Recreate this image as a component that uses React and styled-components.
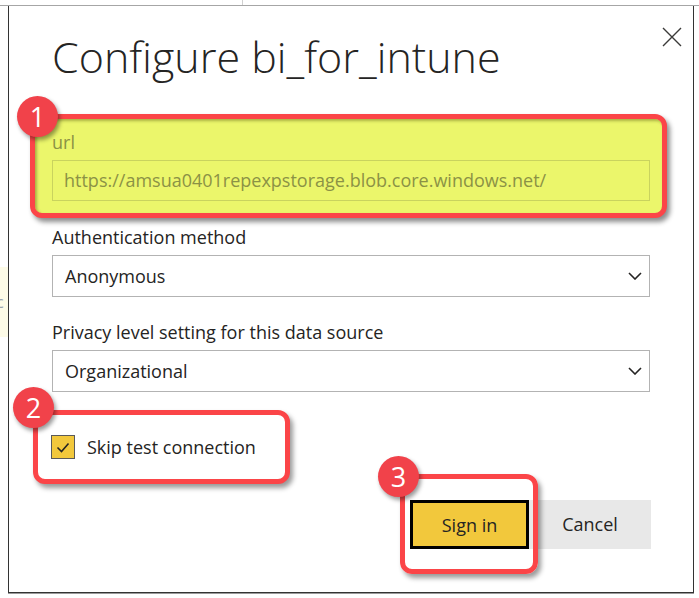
import React from "react";
import styled, { createGlobalStyle } from "styled-components";

const GlobalStyle = createGlobalStyle`
  html, body {
    margin: 0;
    padding: 0;
    background: #ffffff;
  }
  body {
    font-family: "Open Sans", "Noto Sans", sans-serif;
    color: #252423;
  }
`;

function Chevron() {
  return (
    <svg width="14" height="8" viewBox="0 0 14 8" fill="none">
      <path d="M1 1l6 6 6-6" stroke="#252423" strokeWidth="1.6" />
    </svg>
  );
}

function CloseIcon() {
  return (
    <svg width="20" height="20" viewBox="0 0 20 20" fill="none">
      <path d="M1 1l18 18M19 1L1 19" stroke="#3b3a39" strokeWidth="1.4" />
    </svg>
  );
}

function CheckMark() {
  return (
    <svg width="14" height="11" viewBox="0 0 14 11" fill="none">
      <path d="M1.5 5.5l4 4 7-8" stroke="#252423" strokeWidth="1.6" />
    </svg>
  );
}

function App() {
  return (
    <>
      <GlobalStyle />
      <Page>
        <TopStrip>
          <Tick />
        </TopStrip>
        <Body>
          <Gutter>
            <Sliver>c</Sliver>
          </Gutter>
          <Dialog>
            <Header>
              <Title>Configure bi_for_intune</Title>
              <CloseButton aria-label="Close">
                <CloseIcon />
              </CloseButton>
            </Header>

            <Callout $variant="url">
              <Badge $left={-18} $top={-23}>1</Badge>
              <Label $muted>url</Label>
              <UrlInput>https://amsua0401repexpstorage.blob.core.windows.net/</UrlInput>
            </Callout>

            <Label $gap={8}>Authentication method</Label>
            <Select>
              <span>Anonymous</span>
              <Chevron />
            </Select>

            <Label $gap={24}>Privacy level setting for this data source</Label>
            <Select>
              <span>Organizational</span>
              <Chevron />
            </Select>

            <Callout $variant="check">
              <Badge $left={-25} $top={-28}>2</Badge>
              <CheckRow>
                <CheckBox>
                  <CheckMark />
                </CheckBox>
                Skip test connection
              </CheckRow>
            </Callout>

            <Footer>
              <Callout $variant="button">
                <Badge $left={-27} $top={-23}>3</Badge>
                <PrimaryButton>Sign in</PrimaryButton>
              </Callout>
              <SecondaryButton>Cancel</SecondaryButton>
            </Footer>
          </Dialog>
        </Body>
      </Page>
    </>
  );
}

const Page = styled.div`
  width: 699px;
  height: 598px;
  overflow: hidden;
`;

const TopStrip = styled.div`
  height: 5px;
  border-bottom: 1px solid #a6a6a6;
`;

const Tick = styled.div`
  margin-left: 242px;
  width: 1px;
  height: 5px;
  background: #d0d0d0;
`;

const Body = styled.div`
  display: flex;
`;

const Gutter = styled.div`
  width: 8px;
  flex: none;
  overflow: hidden;
`;

const Sliver = styled.div`
  margin-top: 261px;
  height: 70px;
  background: #fdfbe7;
  color: #9aa3ad;
  font-size: 16px;
  line-height: 70px;
  text-indent: -4px;
`;

const Dialog = styled.div`
  box-sizing: border-box;
  width: 686px;
  height: 587px;
  border: 1px solid #333333;
  border-top: none;
  box-shadow: 0 1px 0 #9a9a9a;
  padding: 0 43px 0 43px;
  display: flex;
  flex-direction: column;
`;

const Header = styled.div`
  display: flex;
  justify-content: space-between;
  align-items: flex-start;
  margin-right: -32px;
`;

const Title = styled.h1`
  margin: 26px 0 0;
  font-size: 43px;
  line-height: 50px;
  font-weight: 300;
  color: #252423;
`;

const CloseButton = styled.div`
  margin-top: 21px;
  width: 20px;
  height: 20px;
`;

const calloutShapes = {
  url: `
    margin: 32px -17px 0 -22px;
    padding: 12px 12px 12px 17px;
    background: #ebf66b;
    box-shadow: 3px 4px 5px rgba(0, 0, 0, 0.45), inset 2px 2px 3px rgba(90, 95, 20, 0.45);
  `,
  check: `
    align-self: flex-start;
    margin: 18px 0 0 -19px;
    width: 257px;
    height: 74px;
    padding: 0 0 0 13px;
    background: #ffffff;
    box-shadow: 3px 4px 5px rgba(0, 0, 0, 0.4);
    display: flex;
    align-items: center;
  `,
  button: `
    z-index: 1;
    margin-right: -9px;
    padding: 21px 4px 20px 5px;
    box-shadow: 3px 4px 5px rgba(0, 0, 0, 0.4);
  `,
};

const Callout = styled.div`
  position: relative;
  box-sizing: border-box;
  border: 5px solid #fb4548;
  border-radius: 12px;
  ${({ $variant }) => calloutShapes[$variant]}
`;

const Badge = styled.div`
  position: absolute;
  left: ${({ $left }) => $left}px;
  top: ${({ $top }) => $top}px;
  width: 41px;
  height: 41px;
  border-radius: 50%;
  background: #f1424a;
  color: #ffffff;
  font-size: 27px;
  line-height: 41px;
  text-align: center;
  box-shadow: 2px 3px 4px rgba(0, 0, 0, 0.4);
`;

const Label = styled.div`
  margin-top: ${({ $gap }) => $gap || 0}px;
  margin-bottom: 7px;
  font-size: 18px;
  line-height: 22px;
  color: ${({ $muted }) => ($muted ? "#8b9245" : "#252423")};
`;

const UrlInput = styled.div`
  box-sizing: border-box;
  height: 41px;
  border: 1px solid #c9d35e;
  padding: 0 11px;
  font-size: 18px;
  line-height: 39px;
  color: #8b9245;
  white-space: nowrap;
  overflow: hidden;
`;

const Select = styled.div`
  box-sizing: border-box;
  height: 42px;
  border: 1px solid #b3b3b3;
  padding: 0 7px 0 12px;
  display: flex;
  align-items: center;
  justify-content: space-between;
  font-size: 18px;
  color: #252423;
`;

const CheckRow = styled.div`
  display: flex;
  align-items: center;
  gap: 12px;
  font-size: 18px;
  color: #252423;
`;

const CheckBox = styled.div`
  box-sizing: border-box;
  width: 24px;
  height: 24px;
  border: 1px solid #5a5a5a;
  background: #f2c83c;
  display: flex;
  align-items: center;
  justify-content: center;
`;

const Footer = styled.div`
  margin-top: -10px;
  margin-right: -1px;
  display: flex;
  justify-content: flex-end;
  align-items: center;
`;

const buttonBase = `
  box-sizing: border-box;
  height: 49px;
  display: flex;
  align-items: center;
  justify-content: center;
  font-size: 18px;
  color: #252423;
`;

const PrimaryButton = styled.div`
  ${buttonBase}
  width: 119px;
  background: #f2c83c;
  border: 3px solid #000000;
`;

const SecondaryButton = styled.div`
  ${buttonBase}
  width: 122px;
  background: #e8e8e8;
`;

export default App;
